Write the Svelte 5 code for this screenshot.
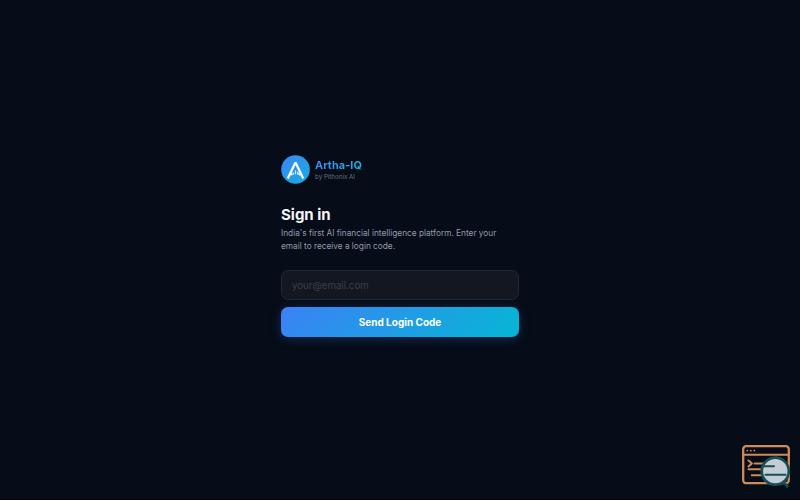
<script>
  let email = $state('');
</script>

<main>
  <section class="login">
    <header class="brand">
      <svg class="logo" viewBox="0 0 29 29" aria-hidden="true">
        <defs>
          <linearGradient id="logo-bg" x1="0" y1="0" x2="1" y2="1">
            <stop offset="0" stop-color="#3b86f5" />
            <stop offset="1" stop-color="#16aee0" />
          </linearGradient>
        </defs>
        <circle cx="14.5" cy="14.5" r="14.3" fill="url(#logo-bg)" />
        <path d="M6.7 23.5 14.5 7.4l7.8 16.1" fill="none" stroke="#fff" stroke-width="2.2" stroke-linejoin="bevel" />
        <path d="M9.6 20.3 11.5 18.6M19.4 20.3l-1.9-1.7" fill="none" stroke="#fff" stroke-width="1.3" />
        <path d="M12.2 17.5v2.2M14.5 15.5v3.8M16.8 16.5v3.2" fill="none" stroke="#e8f5ff" stroke-width="1.2" />
      </svg>
      <div>
        <div class="name">Artha-IQ</div>
        <div class="by">by Pithonix AI</div>
      </div>
    </header>

    <h1>Sign in</h1>
    <p>
      <span>India's first AI financial intelligence platform. Enter your</span>
      <span>email to receive a login code.</span>
    </p>

    <form onsubmit={(e) => e.preventDefault()}>
      <input type="email" placeholder="your@email.com" bind:value={email} />
      <button type="submit">Send Login Code</button>
    </form>
  </section>

  <svg class="badge" viewBox="0 0 52 46" aria-hidden="true">
    <g fill="none" stroke="#d18a58" stroke-width="2.3" stroke-linecap="round" stroke-linejoin="round">
      <rect x="3.2" y="2.2" width="45.6" height="37" rx="3" />
      <path d="M3 10.8h46" stroke-width="1.9" />
      <path d="M7.3 6.6h.1M10.8 6.6h.1M14.3 6.6h.1" stroke-width="1.7" />
      <path d="m8.5 16.5 3.4 2.9-3.4 3M14.5 19.4H26M8.5 25.3h14M11.8 31.3H22" stroke-width="2" />
    </g>
    <path d="m43.5 38 4.7 5.2" stroke="#174f56" stroke-width="2.6" />
    <circle cx="35.3" cy="27.2" r="13.5" fill="#c3cdd3" stroke="#174f56" stroke-width="2.7" />
    <path d="M24 22.3H34M25.5 30.8H45.5" fill="none" stroke="#174f56" stroke-width="2" stroke-linecap="round" />
  </svg>
</main>

<style>
  :global(body) { margin: 0; background: #060b17; }
  main {
    box-sizing: border-box;
    height: 500px;
    display: flex;
    justify-content: center;
    align-items: flex-start;
    padding-top: 155px;
    overflow: hidden;
    position: relative;
    background: #060c18;
    border-bottom: 1px solid #030409;
    font-family: Inter, "Noto Sans", sans-serif;
  }
  .login { width: 238px; }
  .brand { display: flex; align-items: center; gap: 5px; height: 29px; }
  .logo { width: 29px; height: 29px; flex: none; }
  .name {
    width: max-content;
    margin-top: 2px;
    font-size: 10.8px;
    line-height: 13px;
    letter-spacing: 0.1px;
    font-weight: 700;
    background: linear-gradient(90deg, #438af4, #18b5dc);
    background-clip: text;
    color: transparent;
  }
  .by { font-size: 6.2px; line-height: 10px; color: #687080; }
  h1 { margin: 21px 0 0; font-size: 15px; line-height: 20px; font-weight: 700; color: #f5f7fa; }
  p { margin: 2px 0 0; font-size: 8.27px; line-height: 12.5px; color: #929baa; white-space: nowrap; }
  p span { display: block; }
  form { display: flex; flex-direction: column; gap: 7px; margin-top: 18px; }
  input {
    box-sizing: border-box;
    width: 100%;
    height: 30px;
    padding: 0 10px;
    border: 1px solid #232934;
    border-radius: 7px;
    background: #121721;
    color: #f5f7fa;
    font: 9.7px Inter, "Noto Sans", sans-serif;
    outline: none;
  }
  input::placeholder { color: #3a404b; opacity: 1; }
  button {
    height: 30px;
    padding: 0;
    border: 0;
    border-radius: 7px;
    background: linear-gradient(135deg, #3b82f6, #06b6d4);
    box-shadow: 0 2px 12px rgba(59, 130, 246, 0.25);
    color: #fff;
    font: 700 10px Inter, "Noto Sans", sans-serif;
  }
  .badge { position: absolute; right: 8px; bottom: 9px; width: 52px; height: 46px; }
</style>
